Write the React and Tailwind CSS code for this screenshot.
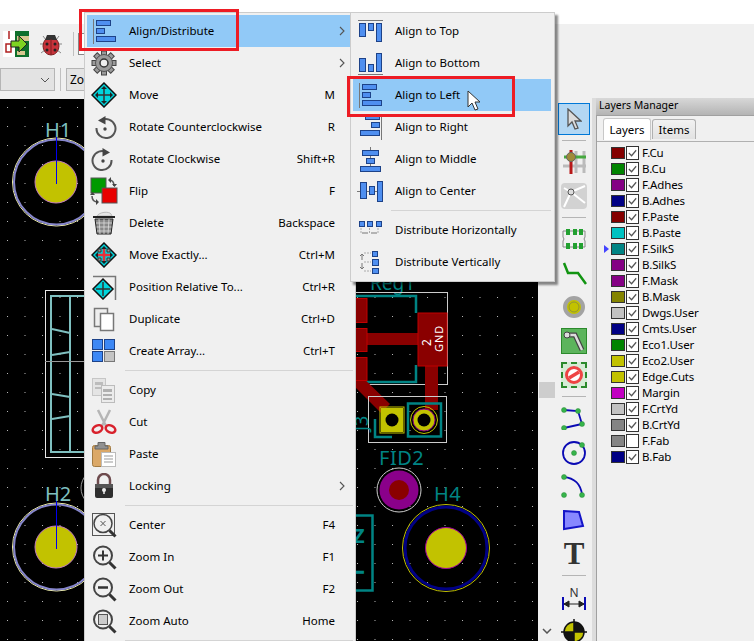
import React from 'react';

const font = { fontFamily: '"Noto Sans", "Liberation Sans", sans-serif' };

const Bar = ({ x, y, w, h }) => <rect x={x + 0.5} y={y + 0.5} width={w} height={h} fill="#4f8ff0" stroke="#1d4288" />;

const Svg = ({ children, size = 26, h, className = '' }) => (
  <svg width={size} height={h || size} viewBox={`0 0 ${size} ${h || size}`} className={`shrink-0 ${className}`}>{children}</svg>
);

const AlignLeft = () => (
  <Svg>
    <path d="M2.5 1v25" stroke="#777" fill="none" />
    <Bar x={5} y={2} w={14} h={5} /><Bar x={5} y={10} w={8} h={5} /><Bar x={5} y={18} w={19} h={5} />
  </Svg>
);
const AlignRight = () => (
  <Svg>
    <path d="M24.5 1v25" stroke="#777" fill="none" />
    <Bar x={8} y={0} w={14} h={5} /><Bar x={14} y={8} w={8} h={5} /><Bar x={3} y={16} w={19} h={5} />
  </Svg>
);
const AlignTop = () => (
  <Svg>
    <path d="M1 2.5h25" stroke="#777" fill="none" />
    <Bar x={2} y={5} w={6} h={13} /><Bar x={11} y={5} w={5} h={7} /><Bar x={19} y={5} w={5} h={18} />
  </Svg>
);
const AlignBottom = () => (
  <Svg>
    <path d="M1 24.5h25" stroke="#777" fill="none" />
    <Bar x={2} y={8} w={6} h={13} /><Bar x={11} y={14} w={5} h={7} /><Bar x={19} y={3} w={5} h={18} />
  </Svg>
);
const AlignMiddle = () => (
  <Svg>
    <path d="M13.5 1v25" stroke="#777" fill="none" />
    <Bar x={5} y={4} w={16} h={5} /><Bar x={9} y={12} w={8} h={5} /><Bar x={3} y={20} w={20} h={5} />
  </Svg>
);
const AlignCenter = () => (
  <Svg>
    <path d="M0 13.5h26" stroke="#777" fill="none" />
    <Bar x={3} y={4} w={6} h={16} /><Bar x={12} y={8} w={5} h={8} /><Bar x={20} y={3} w={5} h={20} />
  </Svg>
);
const DistributeH = () => (
  <Svg>
    <Bar x={2} y={4} w={5} h={5} /><Bar x={10} y={4} w={5} h={5} /><Bar x={19} y={4} w={5} h={5} />
    <path d="M4 11v6M12.500 11v6M21 11v6" stroke="#aaa" strokeDasharray="2 1" fill="none" />
    <path d="M5 16h6M14 16h6" stroke="#777" fill="none" />
  </Svg>
);
const DistributeV = () => (
  <Svg>
    <Bar x={15} y={2} w={5} h={5} /><Bar x={15} y={10} w={6} h={6} /><Bar x={15} y={19} w={6} h={5} />
    <path d="M7 4h7M7 13h7M7 22h7" stroke="#aaa" strokeDasharray="2 1" fill="none" />
    <path d="M5 5v6M5 14v6M3 7l2-2 2 2M3 18l2 2 2-2" stroke="#777" fill="none" />
  </Svg>
);

const Gear = () => (
  <Svg>
    {[0, 45, 90, 135].map(a => (
      <rect key={a} x="10.500" y="1" width="5" height="24" fill="#9a9a9a" stroke="#444" transform={`rotate(${a} 13 13)`} />
    ))}
    <circle cx="13" cy="13" r="8.500" fill="#9a9a9a" stroke="#555" />
    <circle cx="13" cy="13" r="4" fill="#eee" stroke="#333" strokeWidth="1.500" />
  </Svg>
);

const Diamond = ({ cross }) => (
  <Svg>
    <path d="M13 1L25 13 13 25 1 13Z" fill="#00d5dc" stroke="#111" strokeWidth="1.500" />
    <path d="M13 5v16M5 13h16" stroke="#333" strokeWidth="1.500" />
    <path d="M13 4l3 3h-6zM13 22l3-3h-6zM4 13l3-3v6zM22 13l-3-3v6z" fill="#222" />
    {cross && <path d="M13 7v12M7 13h12" stroke="#e8303a" strokeWidth="2.500" />}
    {cross && <path d="M7 7h3v3H7zM16 7h3v3h-3zM7 16h3v3H7zM16 16h3v3h-3z" fill="#999" stroke="#333" />}
  </Svg>
);

const Relative = () => (
  <Svg>
    <path d="M2 2.500h22.500V26" stroke="#777" strokeWidth="1.500" fill="none" />
    <path d="M12 5l10 10-10 10L2 15Z" fill="#00d5dc" stroke="#111" strokeWidth="1.500" />
    <path d="M12 8v14M5 15h14" stroke="#333" strokeWidth="1.500" />
  </Svg>
);

const Rotate = ({ flip }) => (
  <Svg>
    <g transform={flip ? 'translate(26 0) scale(-1 1)' : undefined}>
      <path d="M9 6.500A9.500 9.500 0 1 1 4.500 14" stroke="#555" strokeWidth="2" fill="none" transform="translate(1 0)" />
      <path d="M7 6.500L14.500 2v8.500Z" fill="#444" />
      <circle cx="14" cy="15" r="1.700" fill="#444" />
    </g>
  </Svg>
);

const Flip = () => (
  <Svg size={28}>
    <rect x="1" y="1" width="15" height="15" fill="#009a00" stroke="#555" />
    <rect x="12" y="11" width="15" height="15" fill="#e80000" stroke="#555" />
    <path d="M19 3c4 0 5 2 5 6M2 19c0 4 2 6 6 6" stroke="#555" strokeWidth="1.500" fill="none" />
    <path d="M21 0l-3 3 3 3zM22 7h5l-2.500 3zM6 22v6l3-3zM0 18h5l-2.500-3z" fill="#444" />
  </Svg>
);

const Trash = () => (
  <Svg>
    <path d="M6 6c2-4 12-5 14-2l1 2H6z" fill="#e6e6e6" stroke="#bbb" />
    <path d="M2 7h22" stroke="#222" strokeWidth="2" />
    <path d="M4 9h18l-2 15H6z" fill="#888" stroke="#222" />
    <path d="M8 9l1 15M13 9v15M18 9l-1 15M5 13h16M5.500 17h15M6 21h14" stroke="#ddd" strokeWidth="0.800" />
  </Svg>
);

const Duplicate = () => (
  <Svg>
    <rect x="3.500" y="2.500" width="13" height="18" fill="#eee" stroke="#777" strokeWidth="1.500" />
    <rect x="9.500" y="7.500" width="13" height="17" fill="#fff" stroke="#777" strokeWidth="1.500" />
  </Svg>
);

const ArrayIcon = () => (
  <Svg>
    <rect x="1.500" y="1.500" width="10" height="10" fill="#3d88f5" stroke="#1d4288" />
    <rect x="13.500" y="1.500" width="10" height="10" fill="#3d88f5" stroke="#1d4288" />
    <rect x="1.500" y="13.500" width="10" height="10" fill="#3d88f5" stroke="#1d4288" />
    <rect x="13.500" y="13.500" width="10" height="10" fill="#c4c4c4" stroke="#777" />
  </Svg>
);

const Copy = () => (
  <Svg>
    <rect x="1.500" y="1.500" width="13" height="17" fill="#e4e4e4" stroke="#c6c6c6" />
    <path d="M4 5h8v3H4zM4 10h8v2H4z" fill="#bcbcbc" />
    <rect x="10.500" y="8.500" width="13" height="17" fill="#ececec" stroke="#bcbcbc" />
    <path d="M12 12h9v3h-9zM12 17h9v2h-9zM12 21h9v2h-9z" fill="#b0b0b0" />
  </Svg>
);

const Cut = () => (
  <Svg>
    <path d="M7 1l8 16M19 1l-8 16" stroke="#b5b5b5" strokeWidth="2.500" />
    <ellipse cx="6.500" cy="20" rx="5" ry="3.500" fill="none" stroke="#d8212c" strokeWidth="2.500" transform="rotate(-25 6.500 20)" />
    <ellipse cx="19.500" cy="20" rx="5" ry="3.500" fill="none" stroke="#d8212c" strokeWidth="2.500" transform="rotate(25 19.500 20)" />
  </Svg>
);

const Paste = () => (
  <Svg>
    <rect x="1.500" y="4.500" width="18" height="21" rx="2" fill="#dba867" stroke="#a27a41" />
    <path d="M7 5V1.500h7V5h3v3H4V5z" fill="#909090" stroke="#666" />
    <rect x="10.500" y="11.500" width="14" height="14" fill="#fff" stroke="#bbb" />
    <path d="M13 15h9M13 18h9M13 21h9" stroke="#999" />
  </Svg>
);

const Lock = () => (
  <Svg>
    <path d="M7 12V7a6 6 0 0 1 12 0v5" stroke="#6d4a4d" strokeWidth="2.500" fill="none" />
    <rect x="4" y="11" width="18" height="14" rx="2" fill="#2e2e2e" />
    <path d="M4 11h18v4H4z" fill="#555" />
    <circle cx="13" cy="17" r="2" fill="#eee" />
    <path d="M13 17v4" stroke="#eee" strokeWidth="1.500" />
  </Svg>
);

const Magnifier = ({ children, box }) => (
  <Svg>
    {box && <rect x="1.500" y="1.500" width="22" height="22" fill="none" stroke="#555" />}
    <circle cx="12" cy="11.500" r="9" fill="none" stroke="#444" strokeWidth={box ? 1.500 : 2} />
    <path d="M18.500 18.500l6 6" stroke="#333" strokeWidth="3" />
    {children}
  </Svg>
);

const Chevron = ({ className = '' }) => (
  <svg width="6" height="10" viewBox="0 0 6 10" className={className}>
    <path d="M1 1l4 4-4 4" fill="none" stroke="#555" strokeWidth="1.100" />
  </svg>
);

const mainItems = [
  { label: 'Align/Distribute', icon: <AlignLeft />, arrow: true, active: true },
  { label: 'Select', icon: <Gear />, arrow: true },
  { label: 'Move', icon: <Diamond />, key: 'M' },
  { label: 'Rotate Counterclockwise', icon: <Rotate />, key: 'R' },
  { label: 'Rotate Clockwise', icon: <Rotate flip />, key: 'Shift+R' },
  { label: 'Flip', icon: <Flip />, key: 'F' },
  { label: 'Delete', icon: <Trash />, key: 'Backspace' },
  { label: 'Move Exactly...', icon: <Diamond cross />, key: 'Ctrl+M' },
  { label: 'Position Relative To...', icon: <Relative />, key: 'Ctrl+R' },
  { label: 'Duplicate', icon: <Duplicate />, key: 'Ctrl+D' },
  { label: 'Create Array...', icon: <ArrayIcon />, key: 'Ctrl+T' },
  { sep: true },
  { label: 'Copy', icon: <Copy /> },
  { label: 'Cut', icon: <Cut /> },
  { label: 'Paste', icon: <Paste /> },
  { label: 'Locking', icon: <Lock />, arrow: true },
  { sep: true },
  { label: 'Center', icon: <Magnifier box><path d="M9.500 9l5 5M14.500 9l-5 5" stroke="#555" /></Magnifier>, key: 'F4' },
  { label: 'Zoom In', icon: <Magnifier><path d="M7 11.500h10M12 6.500v10" stroke="#333" strokeWidth="2" /></Magnifier>, key: 'F1' },
  { label: 'Zoom Out', icon: <Magnifier><path d="M7 11.500h10" stroke="#333" strokeWidth="2.500" /></Magnifier>, key: 'F2' },
  { label: 'Zoom Auto', icon: <Magnifier><rect x="7.500" y="6.500" width="9" height="10" fill="#ccc" stroke="#555" /></Magnifier>, key: 'Home' },
  { sep: true },
];

const subItems = [
  { label: 'Align to Top', icon: <AlignTop /> },
  { label: 'Align to Bottom', icon: <AlignBottom /> },
  { label: 'Align to Left', icon: <AlignLeft />, active: true },
  { label: 'Align to Right', icon: <AlignRight /> },
  { label: 'Align to Middle', icon: <AlignMiddle /> },
  { label: 'Align to Center', icon: <AlignCenter /> },
  { sep: true },
  { label: 'Distribute Horizontally', icon: <DistributeH /> },
  { label: 'Distribute Vertically', icon: <DistributeV /> },
];

const MenuRow = ({ item }) => (
  <div className={`relative flex h-8 items-center pr-[15px] ${item.active ? 'bg-[#91c9f7]' : ''}`}>
    <div className="flex w-[33px] justify-center">{item.icon}</div>
    <span className="ml-[9px] flex-1 text-black">{item.label}</span>
    {item.key && <span className="text-black">{item.key}</span>}
    {item.arrow && <Chevron className="absolute right-[5px] top-[11px]" />}
  </div>
);

const layers = [
  ['F.Cu', 'bg-[#840000]'], ['B.Cu', 'bg-[#008400]'], ['F.Adhes', 'bg-[#840084]'], ['B.Adhes', 'bg-[#000084]'],
  ['F.Paste', 'bg-[#840000]'], ['B.Paste', 'bg-[#00c2c2]'], ['F.SilkS', 'bg-[#008484]'], ['B.SilkS', 'bg-[#840084]'],
  ['F.Mask', 'bg-[#840084]'], ['B.Mask', 'bg-[#848400]'], ['Dwgs.User', 'bg-[#c2c2c2]'], ['Cmts.User', 'bg-[#000084]'],
  ['Eco1.User', 'bg-[#008400]'], ['Eco2.User', 'bg-[#c2c200]'], ['Edge.Cuts', 'bg-[#c2c200]'], ['Margin', 'bg-[#c200c2]'],
  ['F.CrtYd', 'bg-[#c2c2c2]'], ['B.CrtYd', 'bg-[#848484]'], ['F.Fab', 'bg-[#848484]'], ['B.Fab', 'bg-[#000084]'],
];

const Check = () => (
  <svg width="12" height="12" viewBox="0 0 12 12"><path d="M2 6l3 3 5-6" fill="none" stroke="#555" strokeWidth="1.300" /></svg>
);

const LayerRow = ({ name, color }) => (
  <div className="relative flex h-4 items-center pl-[14px]">
    {name === 'F.SilkS' && <div className="absolute left-[7px] top-[4px] h-0 w-0 border-y-[4px] border-l-[5px] border-y-transparent border-l-[#4444ff]" />}
    <div className={`h-[12px] w-[14px] border border-[#333] ${color}`} />
    <div className="ml-px flex h-[14px] w-[13px] items-center justify-center border border-[#333] bg-white">
      {name !== 'F.Fab' && <Check />}
    </div>
    <span className="ml-[3px] text-[11.5px] tracking-[-0.15px] text-black">{name}</span>
  </div>
);

const Sep = ({ first }) => <div className={`mb-[5px] h-px w-6 shrink-0 bg-[#b5b5b5] ${first ? 'mt-[5px]' : 'mt-[8px]'}`} />;
const Dot = ({ x, y }) => <circle cx={x} cy={y} r="2.500" fill="#36b44a" stroke="#2a8a3a" strokeWidth="0.500" />;

const RightTools = () => (
  <div className="flex w-9 shrink-0 flex-col items-center pt-[5px]">
    <div className="flex h-8 w-8 shrink-0 items-center justify-center border border-[#0078d7] bg-[#b3d7f3]">
      <svg width="16" height="22" viewBox="0 0 16 22"><path d="M2 1v17l4-4 3 7 3-1-3-7h6Z" fill="#dcdcdc" stroke="#555" strokeWidth="1.300" /></svg>
    </div>
    <Sep first />
    <Svg h={26} className="mt-[3px]">
      <path d="M15 2v22M23 2v22M2 17h23" stroke="#bbb" strokeWidth="3" fill="none" />
      <path d="M3 8h22" stroke="#46a83f" strokeWidth="3" />
      <path d="M10 1v24" stroke="#b81818" strokeWidth="3" />
      <circle cx="10" cy="8" r="4.500" fill="#a08a3a" stroke="#666" />
    </Svg>
    <div className="mt-[8px] h-[26px] w-[26px] shrink-0 rounded-sm bg-[#d2d2d2]">
      <Svg>
        <path d="M10 9L3 24M10 9L24 3M10 9l14 11M10 9L3 5" stroke="#fff" strokeWidth="2" />
        <circle cx="10" cy="9" r="3" fill="#ddd" stroke="#555" />
      </Svg>
    </div>
    <Sep />
    <Svg h={22} className="mt-[5px]">
      <path d="M2 3h22v6l-1 2 1 2v6H2v-6l1-2-1-2z" fill="none" stroke="#888" />
      <path d="M5 1h4v6H5zM12 1h4v6h-4zM18 1h4v6h-4zM5 15h4v6H5zM12 15h4v6h-4zM18 15h4v6h-4z" fill="#22a030" />
    </Svg>
    <Svg h={24} className="mt-[11px]">
      <path d="M3 2l4 10h10l8 11" fill="none" stroke="#129412" strokeWidth="2.500" />
    </Svg>
    <Svg h={24} className="mt-[10px]">
      <circle cx="13" cy="12" r="9" fill="#c2c200" stroke="#a3a3a3" strokeWidth="4" />
      <circle cx="13" cy="12" r="5" fill="#c2c200" stroke="#666" strokeWidth="0.500" />
    </Svg>
    <div className="mt-[9px] h-[26px] w-[26px] shrink-0 border border-[#2c8a2c] bg-[#5cb45c]">
      <svg width="24" height="24" viewBox="0 0 24 24">
        <path d="M4 6h9l7 15" fill="none" stroke="#444" strokeWidth="5" />
        <path d="M4 6h9l7 15" fill="none" stroke="#ddd" strokeWidth="2.500" />
        <circle cx="5" cy="6" r="3" fill="#ddd" stroke="#444" />
      </svg>
    </div>
    <div className="mt-[8px] flex h-[26px] w-[26px] shrink-0 items-center justify-center border-2 border-dashed border-[#2c8a2c] bg-[#d6ecd6]">
      <svg width="18" height="18" viewBox="0 0 18 18">
        <circle cx="9" cy="9" r="7.500" fill="#fff" stroke="#e44" strokeWidth="3" />
        <path d="M4 12l10-6" stroke="#e44" strokeWidth="3.500" />
      </svg>
    </div>
    <Sep />
    <Svg className="mt-[2px]">
      <path d="M3 6l14 1 4 13L3 24" fill="none" stroke="#0a0ab4" strokeWidth="1.800" />
      <Dot x={3} y={6} /><Dot x={17} y={7} /><Dot x={21} y={20} /><Dot x={3} y={24} />
    </Svg>
    <Svg className="mt-[10px]">
      <circle cx="13" cy="13" r="11" fill="none" stroke="#0a0ab4" strokeWidth="1.800" />
      <Dot x={13} y={13} /><Dot x={21} y={5} />
    </Svg>
    <Svg className="mt-[7px]">
      <path d="M3 4c10 1 17 7 18 18" fill="none" stroke="#0a0ab4" strokeWidth="1.800" />
      <Dot x={3} y={4} /><Dot x={3} y={22} /><Dot x={21} y={22} />
    </Svg>
    <Svg h={22} className="mt-[10px]">
      <path d="M3 2l15 1 4 14-19 3Z" fill="#8888ff" stroke="#1414c8" strokeWidth="2" />
    </Svg>
    <div className="mt-[10px] h-[26px] shrink-0 font-['Liberation_Serif'] text-[31px] font-bold leading-[26px] text-[#333]">T</div>
    <Sep />
    <Svg className="mt-[3px]">
      <path d="M2 13v14M24 13v14" stroke="#0a0ab4" strokeWidth="2" />
      <path d="M3 20h20M3 20l5-3v6zM23 20l-5-3v6z" stroke="#222" fill="#222" />
      <text x="13" y="13" textAnchor="middle" fontSize="12" fill="#333" style={font}>N</text>
    </Svg>
    <Svg className="mt-[9px]">
      <circle cx="13" cy="13" r="10" fill="#c2c200" stroke="#111" strokeWidth="1.500" />
      <path d="M13 13V3a10 10 0 0 1 10 10zM13 13v10a10 10 0 0 1-10-10z" fill="#111" />
      <path d="M0 13h26M13 0v26" stroke="#111" strokeWidth="1.500" />
    </Svg>
  </div>
);

// the board drawing behind the menus
const Board = () => (
  <svg viewBox="0 98 538 543" className="h-full w-full" style={font}>
    <defs>
      <pattern id="grid" x="7" y="107" width="17.500" height="19" patternUnits="userSpaceOnUse">
        <rect width="1" height="1" fill="#b8b8b8" />
      </pattern>
    </defs>
    <rect x="0" y="98" width="538" height="543" fill="#000" />
    <rect x="0" y="98" width="538" height="543" fill="url(#grid)" />
    <rect x="0" y="98" width="538" height="1" fill="#f0f0f0" />

    {[182, 547].map(cy => (
      <g key={cy}>
        <circle cx="56.500" cy={cy} r="44" fill="none" stroke="#f2f2a8" />
        <circle cx="56.500" cy={cy} r="42.500" fill="none" stroke="#8686cc" strokeWidth="2" />
        <circle cx="56" cy={cy} r="21" fill="#c2c200" stroke="#c07ac0" />
        <path d={`M56.500 ${cy - 53}V${cy + 2}`} stroke="#0000f0" />
      </g>
    ))}
    <text x="45" y="137" fontSize="20" fill="#7fc0c0">H1</text>
    <text x="45" y="501" fontSize="20" fill="#7fc0c0">H2</text>

    <rect x="45.500" y="290.500" width="60" height="167" fill="none" stroke="#e8e8e8" />
    <rect x="51" y="296" width="60" height="156" fill="none" stroke="#7fc0c0" strokeWidth="2" />
    <path d="M70 296V452M52 329l18 4M52 355l18-3M52 394l18 3M52 419l18-3" stroke="#7fc0c0" strokeWidth="2" fill="none" />
    <path d="M45 361.500h40" stroke="#999" />
    <circle cx="100" cy="488" r="19" fill="none" stroke="#999" />

    <text x="370" y="290" fontSize="19" fill="#008484">Reg1</text>
    <rect x="300" y="292.500" width="147.500" height="92" fill="none" stroke="#ccc" />
    <path d="M340 296h76v17M416 365v17h-76" fill="none" stroke="#008484" strokeWidth="2.500" />
    <path d="M356 333h62v12h-62z" fill="#8a0000" />
    <path d="M425 366h13v44h-13zM348 380l9-8 33 32-9 9z" fill="#8a0000" />
    <rect x="340" y="298.500" width="27" height="24" fill="#8a0000" stroke="#c00000" />
    <rect x="340" y="328.500" width="27" height="23" fill="#8a0000" stroke="#c00000" />
    <rect x="340" y="357.500" width="27" height="23" fill="#8a0000" stroke="#c00000" />
    <rect x="418" y="313" width="29" height="53" fill="#8a0000" stroke="#c00000" />
    <text transform="translate(431 346) rotate(-90)" fontSize="12" fill="#fff">2</text>
    <text transform="translate(443 352) rotate(-90)" fontSize="11" letterSpacing="1" fill="#fff">GND</text>

    <rect x="368.500" y="396.500" width="78" height="46" fill="none" stroke="#ccc" />
    <rect x="408" y="403.500" width="33" height="33" fill="none" stroke="#008484" strokeWidth="2.500" />
    <path d="M375 419v18h17" fill="none" stroke="#008484" strokeWidth="2.500" />
    <rect x="380" y="407" width="24" height="26" fill="none" stroke="#c2c200" />
    <rect x="381" y="408" width="22" height="24" fill="#c2c200" />
    <circle cx="392" cy="420" r="6.500" fill="#000" />
    <circle cx="424" cy="420" r="13.500" fill="none" stroke="#c2c200" />
    <circle cx="424" cy="420" r="11" fill="#c2c200" stroke="#8a0080" />
    <circle cx="424" cy="420" r="6.500" fill="#000" />
    <text transform="translate(368 431) rotate(-90)" fontSize="18" fill="#008484">J3</text>

    <text x="379" y="465" fontSize="20" letterSpacing="0.500" fill="#008484">FID2</text>
    <circle cx="399" cy="490" r="22" fill="none" stroke="#ccc" />
    <circle cx="399" cy="490" r="19.500" fill="#8a008a" />
    <circle cx="399" cy="490" r="10" fill="#8a0000" />

    <text x="434" y="501" fontSize="20" letterSpacing="0.500" fill="#008484">H4</text>
    <circle cx="446" cy="548" r="43.500" fill="none" stroke="#c2c200" />
    <circle cx="446" cy="548" r="41" fill="none" stroke="#000084" strokeWidth="3" />
    <circle cx="446" cy="548" r="20.500" fill="#c2c200" stroke="#a000a0" />

    <path d="M340 515.500h32.500v75H340" fill="none" stroke="#008484" strokeWidth="2.500" />
    <text x="353" y="543" fontSize="20" fontWeight="700" fill="#008484">Z</text>
    <text transform="translate(364 579) rotate(-90)" fontSize="20" fontWeight="700" fill="#008484">1</text>
  </svg>
);

export default function App() {
  return (
    <div className="relative flex h-[641px] w-[754px] flex-col overflow-hidden bg-white text-[11.5px] leading-none" style={font}>
      <div className="h-6 shrink-0 bg-white" />

      <div className="flex h-[44px] shrink-0 items-start bg-[#f0f0f0] pl-[3px] pt-[7px]">
        <svg width="26" height="26" viewBox="0 0 26 26" className="shrink-0">
          <rect x="0" y="0" width="26" height="26" fill="#0f6f2c" />
          <rect x="0" y="0" width="12" height="26" fill="#fff" />
          <path d="M14 5h12v5H14zM14 20h8v4h-8z" fill="#d8c890" />
          <path d="M6 0v8M3 13h5v8H3z" stroke="#b02020" fill="none" strokeWidth="1.500" />
          <path d="M8 10h8V5l8 8-8 8v-5H8z" fill="#7ed321" stroke="#222" />
        </svg>
        <svg width="22" height="26" viewBox="0 0 22 26" className="ml-[11px] shrink-0">
          <path d="M3 5l3 4M19 5l-3 4M0 13h4M22 13h-4M1 22l4-3M21 22l-4-3" stroke="#888" />
          <ellipse cx="11" cy="15" rx="8" ry="9" fill="#c8323a" stroke="#7d2020" />
          <path d="M7 4h8l2 5H5z" fill="#333" />
          <path d="M11 8v16" stroke="#7d2020" />
          <circle cx="7" cy="13" r="1.500" fill="#222" /><circle cx="15" cy="13" r="1.500" fill="#222" />
          <circle cx="7" cy="19" r="1.500" fill="#222" /><circle cx="15" cy="19" r="1.500" fill="#222" />
        </svg>
        <div className="ml-[11px] mt-px h-[24px] w-px bg-[#c0c0c0]" />
        <div className="ml-[4px] mt-[2px] h-[22px] w-6 border border-[#888] bg-white" />
      </div>

      <div className="flex h-[30px] shrink-0 items-start bg-[#f0f0f0]">
        <div className="flex h-[23px] w-[55px] items-center justify-end border border-[#b5b5b5] bg-[#e3e3e3] pr-[4px]">
          <svg width="10" height="6" viewBox="0 0 10 6"><path d="M1 1l4 4 4-4" fill="none" stroke="#555" /></svg>
        </div>
        <div className="ml-[5px] h-[23px] w-px bg-[#c0c0c0]" />
        <div className="ml-[5px] flex h-[23px] w-10 items-center border border-[#b5b5b5] bg-[#e3e3e3] pl-[3px] text-[12px] text-black">Zoom</div>
      </div>

      <div className="flex min-h-0 flex-1 bg-[#f0f0f0]">
        <div className="h-full w-[538px] shrink-0"><Board /></div>

        <div className="relative w-[18px] shrink-0 bg-[#f0f0f0]">
          <div className="absolute left-px top-[284px] h-[16px] w-[16px] bg-[#cdcdcd]" />
          <svg width="10" height="6" viewBox="0 0 10 6" className="absolute left-[4px] top-[530px]"><path d="M1 1l4 4 4-4" fill="none" stroke="#555" strokeWidth="1.500" /></svg>
        </div>

        <RightTools />

        <div className="flex min-w-0 flex-1 border-l-4 border-[#dcdcdc]">
          <div className="flex flex-1 flex-col">
            <div className="flex h-[17px] shrink-0 items-center bg-gradient-to-b from-[#d8d8d8] to-[#b4b4b4] pb-[2px] pl-[3px] text-[10.5px] text-black">Layers Manager</div>
            <div className="flex-1 border-l border-t border-[#a0a0a0] bg-[#f0f0f0]">
              <div className="flex h-[26px] items-end border-b border-[#b0b0b0] pl-[6px]">
                <div className="mb-px flex h-[22px] w-[48px] items-center justify-center rounded-t-[3px] border border-b-0 border-[#c8c8c8] bg-white text-black">Layers</div>
                <div className="mb-[2px] ml-px flex h-[20px] w-[44px] items-center justify-center rounded-t-[3px] border border-b-0 border-[#b0b0b0] bg-gradient-to-b from-[#f2f2f2] to-[#e2e2e2] text-black">Items</div>
              </div>
              <div className="pt-[3px]">
                {layers.map(([name, color]) => <LayerRow key={name} name={name} color={color} />)}
              </div>
            </div>
          </div>
        </div>
      </div>

      {/* context menu */}
      <div className="absolute left-[84px] top-[12px] h-[640px] w-[272px] border border-[#cccccc] bg-[#f0f0f0] py-[2px] pl-[2px] pr-[5px]">
        {mainItems.map((item, i) => item.sep
          ? <div key={i} className="ml-[38px] mr-[-3px] py-[3px]"><div className="h-px bg-[#d4d4d4]" /></div>
          : <MenuRow key={i} item={item} />)}
      </div>

      {/* submenu */}
      <div className="absolute left-[350px] top-[12px] h-[270px] w-[205px] border border-[#cccccc] bg-[#f0f0f0] py-[2px] pl-[2px] pr-[3px] shadow-[3px_3px_2px_rgba(0,0,0,0.45)]">
        {subItems.map((item, i) => item.sep
          ? <div key={i} className="ml-[38px] py-[3px]"><div className="h-px bg-[#d4d4d4]" /></div>
          : <MenuRow key={i} item={item} />)}
      </div>

      {/* red annotation boxes and pointer */}
      <div className="absolute left-[79px] top-[9px] h-[42px] w-[160px] border-[3px] border-[#ed1c24]" />
      <div className="absolute left-[347px] top-[76px] h-[41px] w-[168px] border-[3px] border-[#ed1c24]" />
      <svg width="14" height="21" viewBox="0 0 14 21" className="absolute left-[467px] top-[90px]">
        <path d="M1 1v16l4-4 3 7 3-1-3-7h5Z" fill="#fff" stroke="#333" />
      </svg>
    </div>
  );
}
